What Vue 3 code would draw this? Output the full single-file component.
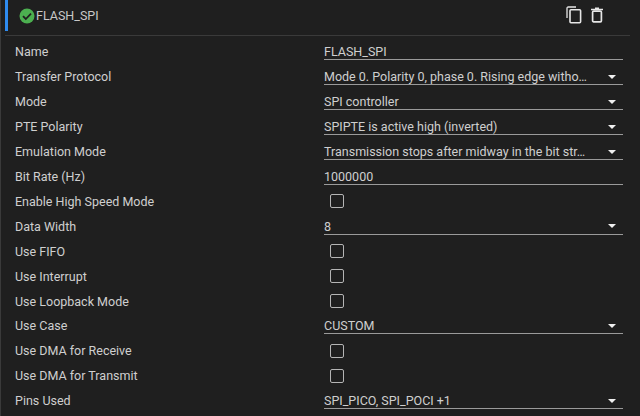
<template>
  <div class="panel">
    <div class="header">
      <div class="title">
        <svg class="status" viewBox="0 0 16 16" width="16" height="16">
          <circle cx="8" cy="8" r="7.5" fill="#4caf50" />
          <path d="M4 8.2l2.8 2.8L12 5.6" fill="none" stroke="#1f1f1f" stroke-width="1.8" />
        </svg>
        <span>FLASH_SPI</span>
      </div>
      <div class="actions">
        <svg viewBox="0 0 16 18" width="16" height="18">
          <path d="M1 12V2.2C1 1.5 1.5 1 2.2 1H10" fill="none" stroke="#e6e6e6" stroke-width="1.3" />
          <rect x="4" y="3.8" width="10.6" height="13" rx="1" fill="none" stroke="#e6e6e6" stroke-width="1.6" />
        </svg>
        <svg viewBox="0 0 12 16" width="12" height="16">
          <path d="M0 2.5h12M4 1.2h4" fill="none" stroke="#e6e6e6" stroke-width="1.6" />
          <rect x="1.6" y="4.2" width="8.8" height="10.6" rx="1" fill="none" stroke="#e6e6e6" stroke-width="1.7" />
        </svg>
      </div>
    </div>
    <div class="fields">
      <div class="row" v-for="f in fields" :key="f.label">
        <div class="label">{{ f.label }}</div>
        <div class="control">
          <div v-if="f.type === 'check'" class="check"></div>
          <div v-else class="input">
            <span class="value">{{ f.value }}</span>
            <span v-if="f.type === 'select'" class="arrow"></span>
          </div>
        </div>
      </div>
    </div>
  </div>
</template>

<script setup>
const fields = [
  { label: 'Name', type: 'text', value: 'FLASH_SPI' },
  { label: 'Transfer Protocol', type: 'select', value: 'Mode 0. Polarity 0, phase 0. Rising edge witho…' },
  { label: 'Mode', type: 'select', value: 'SPI controller' },
  { label: 'PTE Polarity', type: 'select', value: 'SPIPTE is active high (inverted)' },
  { label: 'Emulation Mode', type: 'select', value: 'Transmission stops after midway in the bit str…' },
  { label: 'Bit Rate (Hz)', type: 'text', value: '1000000' },
  { label: 'Enable High Speed Mode', type: 'check' },
  { label: 'Data Width', type: 'select', value: '8' },
  { label: 'Use FIFO', type: 'check' },
  { label: 'Use Interrupt', type: 'check' },
  { label: 'Use Loopback Mode', type: 'check' },
  { label: 'Use Case', type: 'select', value: 'CUSTOM' },
  { label: 'Use DMA for Receive', type: 'check' },
  { label: 'Use DMA for Transmit', type: 'check' },
  { label: 'Pins Used', type: 'select', value: 'SPI_PICO, SPI_POCI +1' }
]
</script>

<style>
html,
body {
  margin: 0;
  background: #1f1f1f;
}
</style>

<style scoped>
.panel {
  width: 640px;
  height: 416px;
  overflow: hidden;
  background: #1f1f1f;
  border-left: 1px solid #3a3a3a;
  box-sizing: border-box;
  font-family: Roboto, "Liberation Sans", sans-serif;
  font-size: 12.5px;
  color: #cfcfcf;
}

.header {
  display: flex;
  justify-content: space-between;
  height: 35px;
  margin: 0 10px 0 4px;
  border-bottom: 1px solid #3a3a3a;
}

.title {
  display: flex;
  align-items: center;
  gap: 1px;
  height: 31px;
  padding-left: 11px;
  border-left: 3px solid #2f8cf0;
  color: #c8c8c8;
}

.actions {
  display: flex;
  gap: 9px;
  padding: 6px 27px 0 0;
}

.actions svg:last-child {
  margin-top: 1px;
}

.fields {
  padding-top: 3.4px;
}

.row {
  display: flex;
  align-items: center;
  height: 24.93px;
}

.label {
  width: 323px;
  padding-left: 14px;
  box-sizing: border-box;
  white-space: nowrap;
}

.control {
  width: 299px;
}

.input {
  display: flex;
  align-items: center;
  justify-content: space-between;
  height: 15px;
  padding-top: 2px;
  margin-bottom: 1px;
  border-bottom: 1px solid #9a9a9a;
}

.value {
  white-space: nowrap;
}

.arrow {
  margin-right: 7px;
  border-left: 4.5px solid transparent;
  border-right: 4.5px solid transparent;
  border-top: 4.5px solid #f0f0f0;
}

.check {
  width: 12px;
  height: 12px;
  margin-left: 6px;
  border: 1.5px solid #b5b5b5;
  border-radius: 2px;
}
</style>
